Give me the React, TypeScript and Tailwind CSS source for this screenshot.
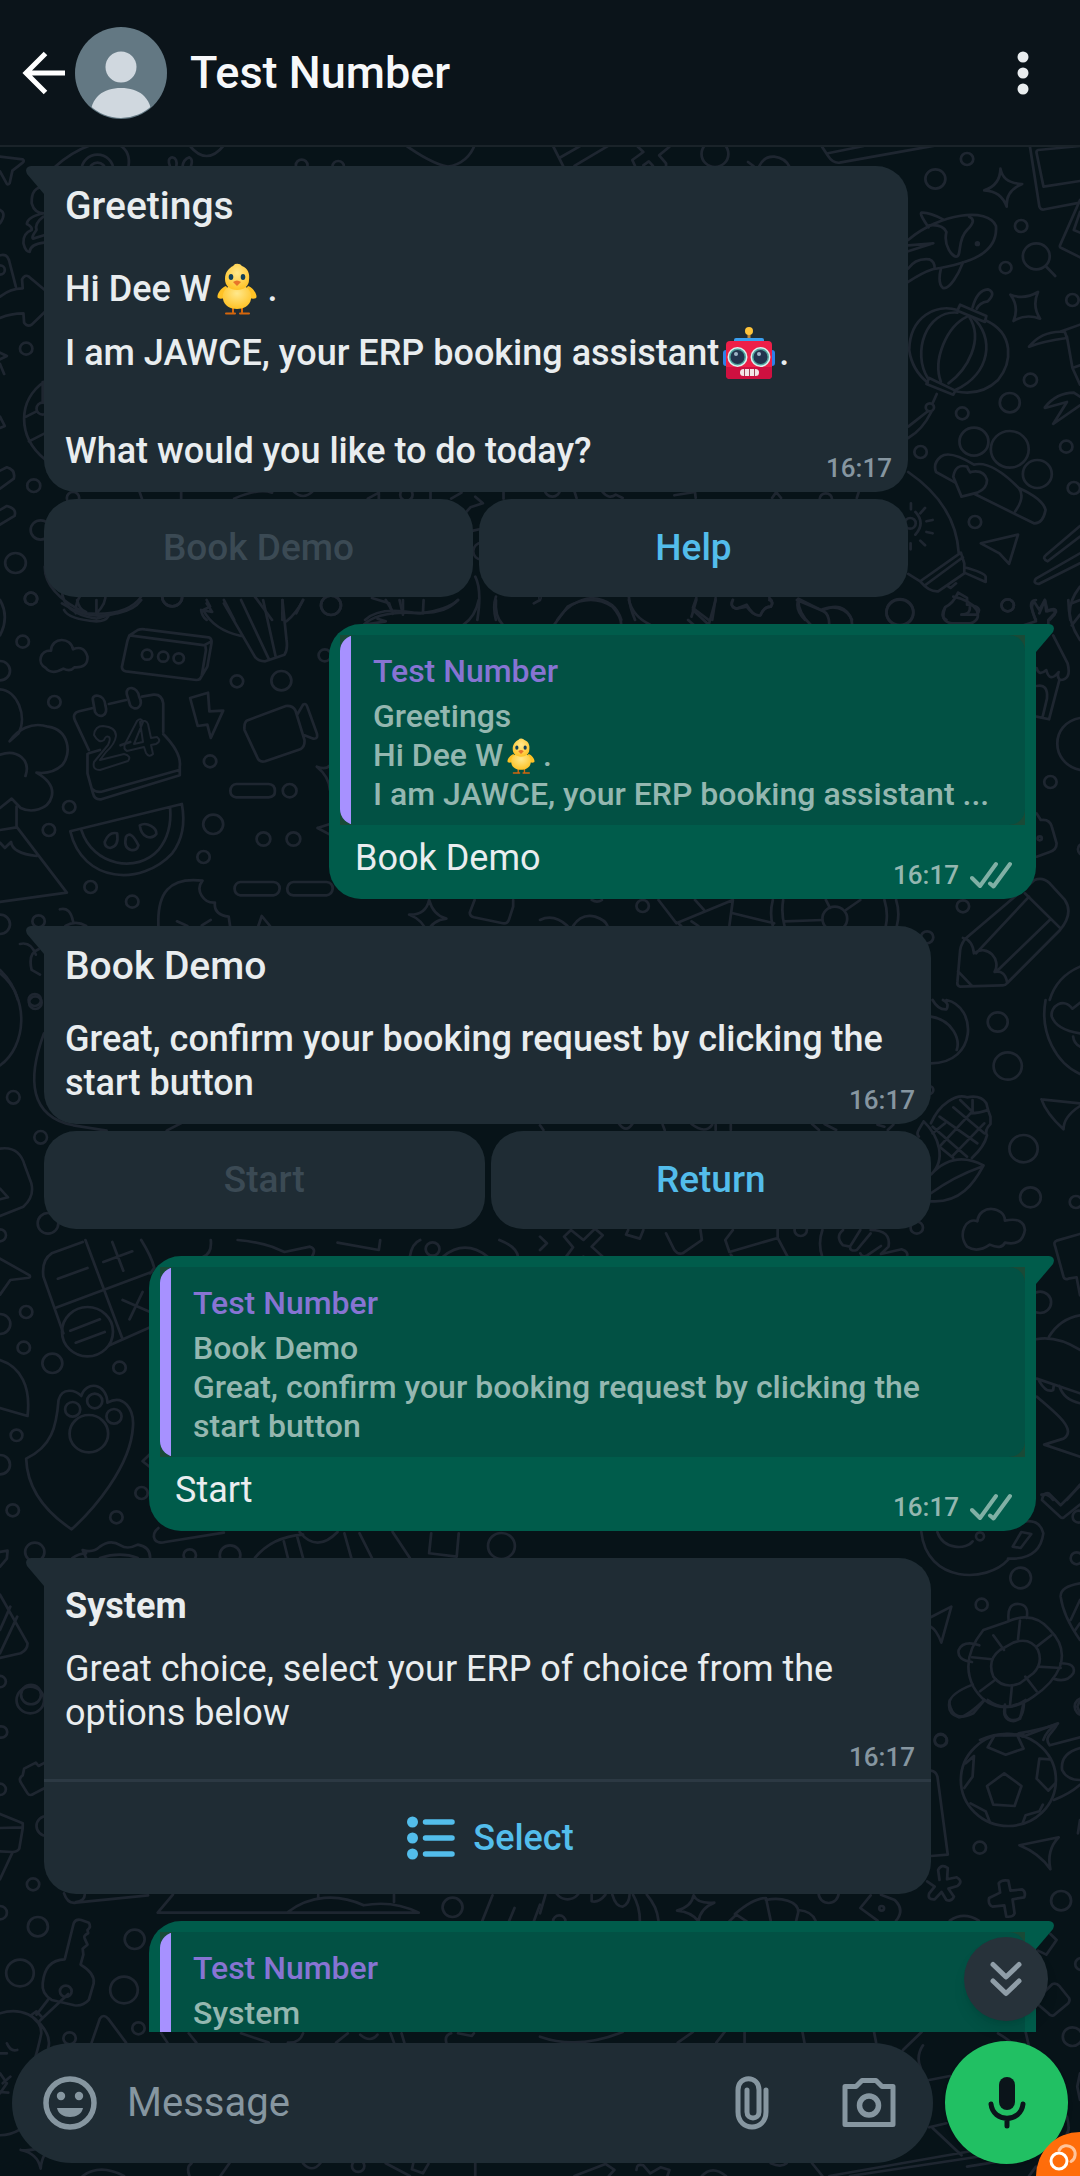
import type { ReactNode } from "react";

type Patch = {
  x: number;
  y: number;
  dots: [number, number, number][];
  lines: string[];
};

/* Line-art doodles of the chat wallpaper, drawn at three times their size. */
const patches: Patch[] = [
  {
    x: 0,
    y: 0,
    dots: [[876, 496, 17], [982, 500, 17], [283, 510, 46], [283, 512, 24]],
    lines: [
      "M0 470L66 478Q72 482 66 488L36 512L28 550Q22 558 18 548L0 514",
      "M160 500Q210 455 262 436M348 436Q380 455 373 500",
      "M494 500Q484 476 500 472Q516 474 512 500M530 500Q532 478 550 472Q562 478 554 500",
      "M550 436Q600 500 650 436",
      "M1170 430Q1250 490 1300 500Q1360 490 1380 430",
      "M130 560Q90 560 92 610Q100 640 128 640Q80 650 78 672Q94 680 92 690Q66 700 68 730Q74 756 86 756Q88 732 128 728",
      "M126 650Q100 670 106 690Q90 712 96 716L128 706",
      "M0 630Q20 640 0 670",
    ],
  },
  {
    x: 540,
    y: 0,
    dots: [[508, 462, 39], [1240, 477, 18], [1148, 537, 29], [1397, 678, 18], [1352, 803, 17], [1441, 769, 39], [1270, 731, 4]],
    lines: [
      "M34 430L68 500M56 474L120 436M100 498L200 436",
      "M280 436L300 456L268 480L276 498M376 440L346 466L366 490V498M300 496L316 484L328 498",
      "M636 500Q650 468 680 470Q712 474 724 500M604 486L620 498",
      "M816 436L838 470Q850 490 870 488L1150 436M836 460L940 438",
      "M1337 506Q1344 550 1400 552Q1352 572 1355 620Q1340 574 1290 571Q1336 556 1337 506Z",
      "M1422 436L1450 620Q1454 632 1466 628L1568 608M1568 438L1446 450Q1440 452 1442 460L1462 560L1568 543",
      "M1568 600L1510 736Q1508 742 1514 744L1568 772M1568 636L1550 690L1568 698",
      "M1069 720C1160 640 1300 620 1324 678C1330 760 1250 790 1140 808Q1110 818 1069 846",
      "M1128 682Q1100 640 1108 638Q1130 636 1170 658M1130 676Q1170 672 1180 696C1170 740 1200 770 1208 770C1226 770 1210 720 1240 690Q1270 660 1246 650",
      "M1069 736L1142 730L1069 754M1069 806Q1090 774 1130 778Q1146 784 1146 806M1164 806Q1154 850 1170 864C1190 870 1216 820 1228 788",
      "M1468 798L1496 828",
    ],
  },
  {
    x: 0,
    y: 220,
    dots: [[76, 386, 18], [98, 797, 19], [45, 1029, 30], [90, 1136, 18], [118, 930, 29], [1180, 824, 18], [500, 1130, 29], [961, 1156, 29], [124, 566, 18], [0, 150, 14], [1400, 994, 26], [212, 834, 18]],
    lines: [
      "M0 106Q20 100 26 120L46 200M0 230Q30 205 66 205L64 178Q72 162 84 170L130 210M0 294Q30 280 68 280L70 308Q80 322 92 314L130 276",
      "M0 398L20 408L0 418M0 432L12 462",
      "M130 484C50 540 50 650 130 718M124 486V548M76 590L106 574M84 664L130 640M0 590L14 618L0 624",
      "M0 752L20 742Q46 750 40 776L0 806M0 870L20 858Q50 866 42 888L0 914",
      "M130 1040Q130 1120 250 1180M250 1180Q370 1190 410 1130M180 1110Q180 1180 280 1196L316 1186M220 1180Q220 1130 246 1118M280 1180Q310 1150 306 1120",
      "M600 1150L616 1176L584 1170Q586 1190 600 1200M650 1140L680 1200M740 1130L790 1200M820 1140V1200M880 1140L860 1180",
      "M1080 1134L1130 1150L1140 1182M1170 1140V1184M1060 1200Q1100 1160 1200 1178Q1290 1186 1330 1140M1380 1070Q1400 1110 1386 1200M1440 1130Q1430 1160 1440 1200M1550 1150L1568 1140",
      "M404 812L412 836M526 812V836M680 836Q750 804 790 818M850 812Q880 844 910 812M1068 836L1100 818V836M1250 812V836M1310 836L1340 818M1380 830L1402 850L1366 862L1350 880M1462 812V836M1374 932L1392 928",
    ],
  },
  {
    x: 540,
    y: 220,
    dots: [[1546, 240, 18], [1424, 480, 19], [1364, 548, 29], [1226, 580, 18], [1132, 562, 12], [1105, 696, 18], [1260, 665, 42], [1364, 688, 55], [1444, 762, 42], [1528, 680, 18], [1550, 804, 18], [1263, 906, 18], [1358, 1156, 18], [1045, 1176, 39], [1075, 910, 16], [36, 808, 22], [830, 838, 18]],
    lines: [
      "M1366 224Q1406 240 1446 216Q1428 258 1452 296Q1410 280 1375 303Q1392 260 1366 224Z",
      "M1072 390C1074 290 1150 250 1212 270M1126 488Q1080 450 1072 390M1212 278C1120 270 1080 400 1126 474M1240 290C1180 320 1140 420 1164 486M1246 290C1290 360 1240 450 1186 490M1256 292C1320 350 1310 460 1206 510M1292 300C1380 340 1370 430 1330 480Q1280 530 1206 514",
      "M1212 272L1220 254L1296 288L1292 306ZM1122 492L1130 474L1206 512L1200 524ZM1256 262Q1270 210 1300 208Q1326 218 1300 244Q1276 248 1268 266M1152 522L1140 550M1126 574L1069 620M1136 576Q1110 630 1069 654",
      "M1420 380Q1460 330 1524 336L1530 354Q1460 364 1420 380ZM1514 334L1568 314M1530 350L1546 444L1568 436M1546 444L1568 494M1466 562Q1500 518 1550 518L1568 530M1466 564L1530 546L1490 612L1568 556",
      "M1260 734Q1190 690 1164 710Q1140 730 1150 756L1206 788M1260 734Q1310 720 1390 804Q1410 830 1380 874M1390 804Q1460 836 1468 870Q1460 912 1434 910L1262 822",
      "M1224 830L1200 770Q1206 730 1240 740Q1250 762 1250 756Q1290 748 1298 780Q1298 806 1270 818Z",
      "M1069 756C1160 820 1210 900 1216 1000M1104 1084L1222 998L1232 1030V1060L1156 1114Q1130 1116 1104 1084ZM1118 1096L1228 1012M1069 1062L1104 1084M1232 1042Q1290 1058 1294 1070V1086L1232 1058M1186 1100L1192 1104L1208 1090",
      "M1077 850V868M1118 864L1104 880M1140 900L1122 904M1140 940L1122 936M1118 976L1104 962M1076 988V970M1090 876Q1120 910 1090 944",
      "M1280 970L1388 944L1362 1032L1334 1000Z",
      "M1568 918L1470 1004Q1456 1016 1474 1024L1568 950M1568 1000L1440 1076Q1430 1090 1448 1092L1568 1030",
      "M50 1200Q90 1140 150 1134Q220 1140 236 1200M258 1130Q260 1160 276 1200M454 1134L444 1164L490 1200M510 1134L500 1200M560 1140Q550 1160 570 1166L600 1160Q620 1190 640 1186Q650 1160 670 1160Q680 1146 666 1134M750 1140Q740 1170 770 1200M750 1136L820 1172Q880 1140 906 1200",
      "M1214 1118Q1200 1150 1176 1162Q1160 1190 1180 1200M1214 1118L1240 1134V1154Q1290 1160 1268 1184H1224M1440 1200Q1420 1160 1434 1144L1450 1170L1466 1140L1474 1174Q1500 1164 1494 1184L1480 1200M1568 1100Q1530 1150 1540 1200",
      "M100 814L106 834M180 814Q200 840 220 824L240 834M390 826L450 816L452 834M674 834L686 816L700 834M920 834L926 814",
    ],
  },
  {
    x: 0,
    y: 600,
    dots: [[66, 125, 18], [688, 244, 18], [817, 242, 29], [158, 306, 18], [610, 484, 18], [841, 572, 20], [201, 621, 18], [142, 690, 18], [619, 673, 29], [765, 717, 20], [852, 717, 20], [591, 771, 18], [263, 861, 18], [384, 905, 18], [427, 164, 15], [474, 170, 15], [519, 175, 15], [112, 964, 18], [0, 212, 29], [0, 973, 29], [943, 166, 18], [500, -10, 29], [961, 16, 29], [101, 1200, 18], [90, -4, 18]],
    lines: [
      "M133 204C106 190 116 150 148 152C150 110 206 110 212 148Q244 134 254 170Q256 204 216 202Q204 216 184 206Q150 226 133 204Z",
      "M370 122L354 200Q354 212 366 214L570 240Q582 240 586 226L598 150L596 136L376 106ZM376 106L400 90Q410 86 420 88L606 112Q616 116 614 130L602 200L580 238M596 134L614 124",
      "M218 362Q208 340 230 334L270 324M316 312L366 300M412 290L446 284Q470 282 474 310V396M474 402C510 440 526 470 522 500V526L294 598Q274 600 270 580L254 520V462M218 362L258 450M258 460L290 450M350 436L378 426M266 566Q280 580 300 574L520 510",
      "M270 302C264 280 304 280 306 316C316 350 286 356 276 336ZM368 282C364 256 400 258 404 290C420 322 390 336 378 316Z",
      "M552 294L604 278L608 334L648 332L612 414L602 374L574 378Z",
      "M716 362L830 318Q850 316 858 332L884 420Q886 440 872 448L770 484Q752 488 746 470L710 390Q708 370 716 362ZM864 342L880 314Q888 308 892 320L920 400Q924 418 910 416L884 406",
      "M686 552H780Q800 554 798 576Q798 590 780 592H686Q668 590 669 572Q670 554 686 552ZM698 846H794Q812 848 812 866Q810 884 794 886H698Q682 884 681 866Q682 848 698 846ZM852 846H948Q966 848 966 866Q964 884 948 886H852Q834 884 834 866Q836 848 852 846Z",
      "M204 694L528 612Q544 700 500 760C410 860 240 850 204 694ZM236 690C270 800 400 820 460 750Q500 700 494 624M304 726Q316 694 340 700Q346 740 320 744Q304 742 304 726ZM366 710Q380 690 402 736Q398 754 380 750Q358 744 366 710ZM406 676C426 664 456 684 454 702C440 720 410 714 406 676Z",
      "M0 268C50 270 80 350 54 400L28 424C50 390 90 364 140 380C200 390 210 460 180 496Q150 524 106 518Q160 550 150 590C140 630 90 640 60 624L34 596L0 624M0 464C50 446 90 480 74 528",
      "M48 620V680L194 878L0 906M48 682L0 690M0 728L14 744L32 726Q36 760 106 768",
      "M460 978C456 880 490 830 588 842C566 870 590 910 624 908Q620 944 664 950L668 978M514 964L544 978M612 960L586 976M750 978L760 948L784 978",
      "M1188 944Q1236 946 1246 900Q1258 946 1296 956Q1256 960 1240 998Q1228 960 1188 944ZM1378 900L1364 938Q1364 948 1376 952L1460 970Q1474 972 1478 958L1490 920V900",
      "M0 0Q28 50 0 106M186 30Q200 58 280 64Q306 64 314 50M180 10Q260 64 340 40Q390 30 410 0M224 0Q230 30 250 36M280 0V40",
      "M590 30Q620 90 700 108M590 30L610 20L600 0M650 10L740 170Q750 184 770 184L826 164Q836 150 832 120L820 0M700 0L780 176M764 0L800 168M880 0Q860 40 832 64",
      "M1056 74Q1100 30 1220 40Q1300 30 1330 0M1120 0L1140 34M1160 0L1168 36M1230 0L1228 40M1390 0Q1380 50 1346 74M1440 0Q1436 50 1460 74M1060 74L1120 64L1096 56",
      "M920 500Q946 510 958 496M920 500Q956 530 958 570M922 684L958 672M922 684L958 704M174 928Q204 920 212 964M190 978Q220 960 250 978M58 1032Q90 1024 104 1064M112 1048Q80 1060 92 1110L116 1124M0 1110Q40 1150 52 1200",
    ],
  },
  {
    x: 540,
    y: 600,
    dots: [[1045, 38, 39], [1358, 16, 18], [1482, 546, 18], [298, 918, 18], [856, 956, 36], [1228, 919, 18], [1124, 1012, 18], [1451, 715, 6], [1580, 748, 18], [0, -6, 2]],
    lines: [
      "M40 76L80 20Q150 -20 210 20Q236 50 236 76M258 0Q270 50 320 74M454 0L440 50M430 60L446 74M444 30L490 74M510 0L490 74M560 0Q550 20 570 26L600 14Q620 50 640 46Q650 20 670 20Q680 6 666 0M750 0Q750 40 786 74M746 0L820 32Q840 40 840 74M820 28C870 10 906 40 906 72",
      "M1176 24Q1160 66 1196 70H1250Q1280 60 1268 30Q1250 0 1200 -10M1224 44Q1250 44 1248 22M1404 76L1440 64L1426 20Q1424 0 1440 0M1450 40L1466 0L1470 34Q1500 20 1498 36L1476 60V76M1534 0Q1534 70 1568 120M1544 10L1568 0M1544 76L1568 44",
      "M1490 106L1532 190Q1544 240 1510 240Q1500 230 1506 216Q1480 250 1470 210Q1448 230 1442 204M1442 258Q1476 250 1472 296L1460 348M1508 240L1478 358L1442 350",
      "M1568 354C1480 370 1480 490 1568 510M1442 640L1454 660Q1480 656 1486 680L1500 730Q1500 750 1480 756L1442 770",
      "M1408 880L1512 986M1420 890L1266 1060M1240 1012L1436 840Q1460 830 1480 850L1524 900Q1550 940 1510 990L1356 1150Q1350 1158 1340 1156L1220 1160Q1210 1158 1212 1146L1220 1050Q1224 1026 1240 1012ZM1480 960L1330 1110M1228 1014Q1256 1020 1260 1060C1300 1030 1340 1080 1320 1116Q1350 1110 1356 1146M1214 1114L1254 1158",
      "M344 900L396 970L560 900M450 900L476 930M404 972L410 978M560 900L550 976M440 964L460 978M560 940L680 970M676 900Q666 940 676 978M706 900Q700 940 710 978M1000 900Q1012 940 1004 978M1034 900Q1046 940 1036 978M710 964L820 960M830 900L842 924M888 930L930 900",
      "M0 960Q40 940 80 978M96 978Q120 940 160 950Q190 960 196 978M150 900Q166 910 180 900",
      "M1480 1200Q1500 1130 1568 1100",
    ],
  },
  {
    x: 540,
    y: 1000,
    dots: [[1329, 66, 29], [1358, 198, 41], [1404, 446, 41], [1424, 592, 30], [1556, 606, 18], [1094, 683, 18], [1452, 907, 32], [757, 690, 18], [1130, 270, 12]],
    lines: [
      "M1135 50C1200 60 1220 120 1210 150M1180 0C1270 20 1270 190 1135 190M1140 0Q1156 30 1180 28Q1190 10 1170 0",
      "M1468 0C1450 100 1500 190 1568 222M1568 8L1546 26C1520 -10 1480 20 1486 50Q1500 90 1568 100M1548 110Q1550 130 1568 140",
      "M1456 298L1568 310M1456 298Q1470 340 1520 388Q1520 350 1568 318",
      "M1135 370C1160 310 1210 280 1240 292Q1280 284 1296 310Q1300 330 1308 350V372Q1290 390 1298 406Q1290 440 1254 474M1200 322L1290 400M1160 350L1270 430M1140 380L1240 470M1140 400L1176 370M1160 440L1250 340M1196 470L1290 370M1220 300L1260 340M1250 340Q1276 340 1300 330M1160 440L1200 474M1256 300V340",
      "M1114 364C1100 390 1090 400 1100 410M1114 364C1160 410 1180 480 1135 524Q1200 450 1288 496C1260 550 1220 610 1135 604M1282 500Q1200 530 1135 580",
      "M1240 740C1210 700 1240 650 1270 664C1276 610 1350 620 1350 662Q1404 650 1408 690Q1400 740 1350 728Q1340 750 1306 734Q1270 760 1240 740Z",
      "M1568 702L1500 722Q1490 726 1496 740L1520 830Q1524 840 1534 836L1558 832L1568 886M1440 1018Q1500 1006 1568 1050M1478 1010Q1510 956 1568 946M1442 1136L1568 1180M1450 1144Q1470 1180 1490 1170L1492 1156M1508 1158Q1520 1200 1568 1210M1442 1190C1500 1240 1560 1290 1520 1316L1464 1334L1568 1370M1456 1484Q1476 1480 1490 1500M1568 1454L1530 1500",
      "M0 710L20 730L0 750M70 710L96 742L76 770M70 710L90 690L126 720L160 686L182 706L150 740L182 770M126 770V774M256 690L250 704L290 716L300 690M366 700L390 750Q400 764 414 760L470 720L466 690M560 690L538 720L550 756L690 714V688M554 764L560 772M690 714L720 772M820 690Q806 730 820 772",
      "M880 690Q856 710 880 736L900 740L930 690M900 740Q900 756 920 750L960 700M930 760Q936 774 950 766L990 738M960 690Q1020 690 1012 740L990 762L1050 748Q1070 754 1066 770",
      "M0 376L10 390M230 372Q250 400 268 372M356 374L362 390M440 372Q480 404 500 374M510 374V390M554 374V390M790 372L810 390M826 372L860 390M980 374L1000 380M1010 390L1026 374",
    ],
  },
  {
    x: 0,
    y: 1240,
    dots: [[76, 216, 18], [0, 252, 30], [69, 323, 18], [152, 370, 29], [347, 383, 18], [211, 508, 22], [275, 483, 22], [331, 529, 22], [258, 581, 56], [48, 586, 17], [0, 674, 29], [411, 759, 18], [37, 811, 18], [338, 832, 18], [101, 936, 28], [254, 275, 74], [668, 946, 30], [551, 946, 18], [1456, 918, 39], [1256, 27, 20], [0, 1325, 17], [90, 1364, 29]],
    lines: [
      "M0 56L86 106Q90 114 78 114L30 120L0 164",
      "M410 0Q440 50 448 84L436 100M240 6L150 40Q120 60 126 110L184 280M248 0L356 298M160 204L440 96M318 316L436 262M300 66L384 34M326 6L358 92M168 116L254 84M356 180L436 216M414 156L376 238M204 272L290 238M220 308L304 276",
      "M170 480C180 440 220 450 236 468C250 420 310 430 312 488C360 460 390 510 386 560C380 680 270 810 208 868Q80 780 76 656C150 620 164 560 170 480Z",
      "M0 360C60 380 90 440 80 528L0 504M436 642L414 664L436 682",
      "M460 864Q440 880 450 900Q460 912 480 906L650 878M250 954L240 930Q270 940 290 920Q320 896 350 916Q370 930 400 914Q436 920 436 954M210 954Q230 940 250 940M290 954Q350 934 400 954",
      "M740 954Q790 890 880 884M824 904L836 954M862 886L880 954M870 876Q920 940 980 876M1000 880L1020 954M1044 880L1080 954M1140 876L1190 954M1252 880L1246 940L1326 950L1332 880",
      "M0 1064L80 1210Q80 1230 60 1240L0 1254M0 1240L50 1130M0 1170L30 1100M0 936L22 932L20 956L0 980",
      "M612 0Q616 40 590 50M690 0Q740 4 790 20L826 36L900 20Q920 26 906 50M980 8L1100 30L1104 0M1190 50Q1196 10 1220 0M1286 50Q1350 -4 1416 50M1450 0Q1500 20 1504 50",
    ],
  },
  {
    x: 0,
    y: 1700,
    dots: [[4, 96, 17], [88, 0, 40], [0, 268, 17], [0, 638, 20], [96, 553, 18], [110, 680, 29], [391, 718, 29], [58, 819, 40], [360, 870, 40], [402, 985, 18], [202, 1015, 18], [1314, 622, 29], [191, 874, 17], [136, 378, 30], [1040, 1398, 18]],
    lines: [
      "M130 188L112 198L104 188L70 206L66 226Q52 236 62 250L80 280Q86 290 100 280L130 264",
      "M0 342L66 370V382L0 384M66 384L56 446Q50 456 36 456L0 454M36 458L0 538",
      "M186 580Q196 612 220 608L430 586M220 606Q246 602 246 584M502 584L458 638H1216Q1140 600 1056 616C980 580 900 586 836 636M924 584V594M1144 584V606M1430 586L1400 664M1494 624L1478 664M1568 614L1550 664",
      "M188 778L214 670Q220 656 236 660L258 668Q266 680 254 690L256 700Q240 708 246 716L254 734L240 746L242 764L234 794Q276 820 272 850L258 900Q240 920 216 916L150 900Q120 880 124 850Q130 780 188 778Z",
      "M142 896L106 944M198 882L120 958M90 946L106 934L124 954L110 968ZM0 940C60 920 120 950 120 1000Q110 1050 100 1080M116 970Q150 1010 140 1044M0 1060L20 1060M20 1030Q30 1056 50 1050M0 1120L20 1150L0 1180M0 1176L24 1178M8 1150L30 1130",
      "M266 1028L290 956Q300 940 314 956L366 1028M468 1000L486 1028M548 1000L570 1028M700 1000L780 1028M836 1028Q870 1030 880 1000M976 1028L1010 1000M1046 1004Q1076 1030 1096 1004M1134 1000L1144 1028M1166 1000L1174 1028M1296 1028Q1290 1006 1310 1000M1330 1000L1370 1008L1376 1000",
      "M0 1306Q30 1306 56 1290M60 1350Q90 1354 130 1340M60 1350Q110 1360 118 1406Q120 1380 130 1364M240 1428Q290 1390 360 1428M550 1428Q540 1400 556 1390M666 1390L640 1428M880 1390Q906 1420 930 1390M1120 1390L1190 1428M1200 1390L1196 1408L1228 1420L1244 1392M1380 1390V1428",
    ],
  },
  {
    x: 540,
    y: 1700,
    dots: [[1164, 122, 18], [1360, 240, 138], [1277, 443, 18], [1513, 602, 29], [992, 625, 7], [56, 664, 18], [1546, 1010, 28], [1572, 792, 18], [80, 560, 38], [838, 580, 29]],
    lines: [
      "M1190 0Q1180 40 1216 52Q1240 50 1290 0M1300 0Q1350 40 1410 0M1350 14V40Q1360 70 1394 56L1404 10M1568 0L1560 20L1568 40",
      "M1348 220L1398 258L1378 318L1316 314L1298 258ZM1300 142L1320 106H1386L1404 146L1352 164ZM1260 168L1256 230L1232 264M1260 168L1236 190M1480 178L1450 176L1442 236L1476 272L1496 250M1250 310L1294 334L1306 366M1460 314L1450 334L1410 346L1402 368",
      "M1390 100Q1450 90 1502 72C1490 100 1460 110 1480 136L1568 112M1568 144Q1510 160 1516 210Q1530 240 1568 240M1492 300Q1540 280 1568 254M1568 360L1562 400",
      "M1392 436L1506 412Q1470 450 1482 508Q1450 460 1392 436Z",
      "M1135 212Q1150 214 1154 230L1184 464L1135 468",
      "M1160 540L1156 510Q1166 490 1184 504L1182 538L1210 532Q1230 544 1212 558L1186 566L1202 590Q1196 606 1180 600L1166 576L1146 598Q1124 600 1130 580L1146 560L1124 544",
      "M1336 578L1332 550Q1340 538 1360 542L1366 572L1400 568Q1412 576 1406 592L1372 598L1378 640Q1374 652 1354 650L1348 616L1314 620Q1300 614 1304 594Z",
      "M398 632Q440 620 446 586Q456 612 506 608Q466 624 460 664Q440 636 398 632ZM566 642Q620 594 656 594L670 662M550 664L570 644L600 664M656 600C700 590 750 604 750 636L744 662M750 630Q790 634 800 662M960 586L930 624L980 662M990 584L1030 600Q1060 630 1034 662M1190 662Q1230 634 1274 662",
      "M150 584V604Q170 610 190 584M210 584Q220 620 240 620Q260 610 260 584M270 584Q290 620 290 662M310 584Q340 620 344 662M16 584L0 640",
      "M1482 702L1500 720L1470 764L1446 752M1450 890L1488 852Q1500 848 1508 858L1536 894Q1540 902 1534 910L1492 946Q1482 950 1476 940L1440 908",
      "M0 1010Q110 1050 240 996M444 996L400 1028M536 996L512 1028M594 996V1028M762 996L768 1028M970 996L976 1028M1108 996L1054 1050M1112 1036Q1090 1070 1106 1106M1130 1140L1190 1128M1330 1000Q1390 1036 1410 1080M1410 996L1420 1040M1140 1284L1224 1366M1130 1282L1180 1270M840 1428L1270 1350M900 1428L1300 1366M1240 1400L1420 1370M100 1428L190 1392L216 1410L200 1428M280 1410Q280 1390 300 1396L320 1420L350 1402L376 1410L370 1428M470 1428Q500 1394 540 1428M670 1390Q700 1404 716 1390M790 1390L820 1428M1530 1250Q1540 1290 1530 1300M1568 1120L1560 1160L1568 1200M1420 1428L1440 1400",
    ],
  },
  {
    x: 900,
    y: 1240,
    dots: [[362, 1014, 31], [245, 1094, 18], [530, 955, 18], [240, 889, 12], [536, 830, 18], [550, 1400, 26], [122, 1500, 18]],
    lines: [
      "M64 876C80 1030 260 1030 324 960M324 956Q420 960 430 880Q420 840 378 844M112 876C130 930 200 930 218 904M338 920L364 876L394 882L362 924Z",
      "M426 780Q430 756 446 760L482 796L540 738M426 780L482 832Q486 836 492 832L540 794",
      "M92 1132L154 1100L124 1208Q110 1170 92 1160M540 1030Q480 1040 482 1070Q490 1130 540 1200M512 1140L540 1080M526 1170L540 1150",
      "M250 1170L320 1146Q400 1110 450 1170Q500 1220 480 1280Q460 1330 400 1370C330 1420 260 1410 220 1340C190 1280 210 1220 250 1170ZM300 1230L340 1208Q390 1190 414 1230Q430 1270 400 1300L360 1330Q310 1350 280 1310Q260 1260 300 1230Z",
      "M326 1142Q320 1090 356 1092Q388 1094 380 1134M238 1216Q190 1200 176 1230Q170 1260 216 1266M482 1270Q530 1270 520 1300Q500 1330 460 1316M314 1402Q306 1440 340 1444Q370 1440 372 1390M218 1334Q150 1360 148 1390Q160 1450 220 1420L254 1380",
      "M280 1186L312 1230M360 1142L354 1198M454 1186L410 1220M482 1284L414 1280M376 1310L410 1354M336 1336L330 1396M240 1354L288 1318M216 1252L276 1258",
      "M240 1500Q310 1470 370 1490L474 1450Q440 1470 430 1500M310 1486L370 1482",
    ],
  },
  {
    x: 0,
    y: 940,
    dots: [[106, 188, 19], [40, 472, 19], [122, 592, 19], [144, 850, 31], [0, 886, 18]],
    lines: [
      "M0 100C90 170 80 320 0 376",
      "M132 280C80 420 90 530 220 556L320 572M500 572L550 546",
      "M0 626C40 620 64 640 74 676L94 730Q104 770 70 800L0 828M0 746L24 772L0 778",
    ],
  },
];

function Wallpaper() {
  return (
    <svg aria-hidden="true" width="1080" height="2176" viewBox="0 0 1080 2176" className="pointer-events-none absolute top-0 left-0" fill="none" stroke="#1e2630" strokeWidth="8" strokeLinecap="round" strokeLinejoin="round">
      {patches.map((p, i) => (
        <g key={i} transform={`translate(${p.x} ${p.y}) scale(${i < 10 ? 0.3444 : 0.3333} 0.3333)`}>
          {p.dots.map(([cx, cy, r], k) => <circle key={k} cx={cx} cy={cy} r={r} />)}
          {p.lines.map((d, k) => <path key={k} d={d} />)}
        </g>
      ))}
      <g strokeWidth="2">
        <path d="M94 735q1-9 9-9 13 1 13 10-1 8-10 16l-6 8 24-6q8 2 4 7l-28 9q-8 0-6-8l14-17q3-6 1-8-3-2-5 3-5 4-10-5Z" />
        <path d="m137 721q4-4 6 1l-9 22 9-2-3-20q6-3 8 2l3 14 6-1q5 4-1 7l-5 1 2 9q-4 4-7-1l-2-6-17 4q-4-2-2-7Z" />
      </g>
    </svg>
  );
}

function Chick({ className }: { className: string }) {
  return (
    <svg role="img" aria-label="chick" viewBox="0 0 52 52" className={`inline-block ${className}`}>
      <defs>
        <radialGradient id="down" cx="50%" cy="35%" r="65%"><stop offset="0" stopColor="#ffe88c" /><stop offset="1" stopColor="#ffc226" /></radialGradient>
      </defs>
      <path d="M22 43v6M31 43v6M15 50.500h9M29 50.500h9" stroke="#d4660c" strokeWidth="2" strokeLinecap="round" />
      <path d="M15 23C9 25 5 33 7 35C11 37 17 34 20 30M37 23C43 25 47 33 45 35C41 37 35 34 32 30" fill="#ffc226" />
      <path d="M26 22C14 22 11 30 12 36C13 43 20 46 26 46C32 46 39 43 40 36C41 30 38 22 26 22Z" fill="url(#down)" />
      <path d="M24 1Q29 0 31 3C37 5 39 11 38 17C38 23 33 27 26 27C19 27 14 23 14 16C14 9 18 5 22 3Z" fill="url(#down)" />
      <ellipse cx="20" cy="14" rx="2.300" ry="3" fill="#12405a" /><ellipse cx="32" cy="14" rx="2.300" ry="3" fill="#12405a" />
      <path d="M22 19Q26 16 30 19L26 23Z" fill="#e8742a" />
    </svg>
  );
}

function Robot() {
  return (
    <svg role="img" aria-label="robot" viewBox="0 0 52 52" className="size-[52px]">
      <path d="M26 6v6" stroke="#c08a3a" strokeWidth="3" /><circle cx="26" cy="4" r="4" fill="#ffc43a" />
      <rect x="11" y="11" width="30" height="6" rx="2" fill="#3aa0f0" />
      <rect x="0" y="23" width="6" height="16" rx="3" fill="#2f80e8" /><rect x="46" y="23" width="6" height="16" rx="3" fill="#2f80e8" />
      <rect x="3" y="14" width="46" height="38" rx="4" fill="#ee1f48" /><path d="M3 40h46v8q0 4-4 4H7q-4 0-4-4Z" fill="#cf1040" />
      <circle cx="14.500" cy="30" r="10" fill="#d9f1f0" /><circle cx="37.500" cy="30" r="10" fill="#d9f1f0" />
      <circle cx="14.500" cy="30" r="8.500" fill="#4fa39d" /><circle cx="37.500" cy="30" r="8.500" fill="#4fa39d" />
      <circle cx="14.500" cy="30" r="7" fill="#22344e" /><circle cx="37.500" cy="30" r="7" fill="#22344e" />
      <circle cx="13" cy="27" r="2" fill="#9fb4c8" /><circle cx="36" cy="27" r="2" fill="#9fb4c8" />
      <rect x="17" y="42" width="19" height="7" rx="3.500" fill="#f3e4e6" /><path d="M21.500 42v7M26.500 42v7M31.500 42v7" stroke="#a04258" />
    </svg>
  );
}

function DarkTail() {
  return <svg aria-hidden="true" viewBox="0 0 18 28" className="absolute top-0 -left-[18px] h-7 w-[18px]"><path d="M18 0H5Q-2 1 1 8L18 28Z" fill="#1f2c34" /></svg>;
}

function GreenTail() {
  return <svg aria-hidden="true" viewBox="0 0 18 28" className="absolute top-0 -right-[18px] h-7 w-[18px]"><path d="M0 0H13Q20 1 17 8L0 28Z" fill="#005c4b" /></svg>;
}

function Received({ title, children, className }: { title: string; children: ReactNode; className: string }) {
  return (
    <article className={`relative grid max-w-full rounded-[32px] rounded-tl-none bg-[#1f2c34] text-[36px] leading-[44px] font-medium text-[#e9edef] ${className}`}>
      <DarkTail />
      <div className="col-start-1 row-start-1 flex flex-col gap-[27px] px-[21px] pt-4 pb-[19px]">
        <h2 className="text-[39px] leading-[48px]">{title}</h2>
        <div>{children}</div>
      </div>
      <time className="col-start-1 row-start-1 mr-4 mb-2 self-end justify-self-end text-[26px] leading-8 text-[#8696a0]">16:17</time>
    </article>
  );
}

function Replies({ used, next, className }: { used: string; next: string; className: string }) {
  return (
    <div className={`mt-[7px] grid max-w-full grid-cols-2 gap-[6px] text-[37px] font-medium ${className}`}>
      <button type="button" disabled className="h-[98px] rounded-[32px] bg-[#1f2c34] text-[#3b4a54]">{used}</button>
      <button type="button" className="h-[98px] rounded-[32px] bg-[#1f2c34] text-[#53bdeb]">{next}</button>
    </div>
  );
}

function Sent({ quote, text, className }: { quote: ReactNode; text?: string; className: string }) {
  return (
    <article className={`relative grid max-w-full self-end rounded-[32px] rounded-tr-none bg-[#005c4b] ${className}`}>
      <GreenTail />
      <div className="col-start-1 row-start-1">
        <div className="m-[11px] bg-[#194a37]">
          <blockquote className="flex h-[190px] overflow-hidden rounded-2xl bg-[#025144] text-[32px] leading-[39px] font-medium text-[#94b7b0]">
            <span className="w-[11px] shrink-0 bg-[#a791ff]" />
            <div className="min-w-0 flex-1 pt-4 pr-3 pl-[22px]">
              <p className="mb-[6px] leading-[40px] text-[#8774d3]">Test Number</p>
              {quote}
            </div>
          </blockquote>
        </div>
        {text && <p className="pb-[19px] pl-[26px] text-[36px] leading-[44px] text-[#e9edef]">{text}</p>}
      </div>
      {text && (
        <div className="col-start-1 row-start-1 mr-6 mb-2 flex items-center gap-[11px] self-end justify-self-end text-[26px] leading-8 font-medium text-[#94b7b0]">
          <time>16:17</time>
          <svg role="img" aria-label="Delivered" viewBox="0 0 42 28" className="h-7 w-[42px]" fill="none" stroke="#80b0a5" strokeWidth="4" strokeLinecap="round" strokeLinejoin="round">
            <path d="M2 17L10 25L26 3M20 22.500L23.500 25.500L40 3" />
          </svg>
        </div>
      )}
    </article>
  );
}

function Header() {
  return (
    <header className="relative flex h-[147px] shrink-0 items-center border-b-2 border-[#1a2329] bg-[#0b141a] pr-[27px] pl-[22px]">
      <button type="button" aria-label="Back" className="mr-[9px]">
        <svg viewBox="0 0 44 44" className="size-11" fill="none" stroke="#fff" strokeWidth="5"><path d="M43 22H4M23.500 2.500L4 22L23.500 41.500" /></svg>
      </button>
      <svg role="img" aria-label="Profile picture" viewBox="0 0 92 92" className="size-[92px]">
        <defs><clipPath id="face"><circle cx="46" cy="46" r="45" /></clipPath></defs>
        <circle cx="46" cy="46" r="46" fill="#637883" />
        <g clipPath="url(#face)" fill="#d0d8df"><circle cx="46" cy="40" r="15.500" /><path d="M15 92C15 70 28 61 46 61C64 61 77 70 77 92Z" /></g>
      </svg>
      <h1 className="flex-1 pl-[23px] text-[45px] leading-[56px] font-medium text-[#f7f8fa]">Test Number</h1>
      <button type="button" aria-label="More options">
        <svg viewBox="0 0 60 44" className="h-11 w-[60px]" fill="#e9edef"><circle cx="30" cy="6" r="5.500" /><circle cx="30" cy="22" r="5.500" /><circle cx="30" cy="38" r="5.500" /></svg>
      </button>
    </header>
  );
}

function Composer() {
  return (
    <footer className="relative flex shrink-0 items-center gap-3 px-3 pt-[9px] pb-3">
      <div className="flex h-[120px] min-w-0 flex-1 items-center rounded-full bg-[#1f2c34] pr-[37px] pl-[31px]">
        <button type="button" aria-label="Emoji">
          <svg viewBox="0 0 54 54" className="size-[54px]" fill="none" stroke="#8696a0" strokeWidth="5.500">
            <circle cx="27" cy="27" r="24" />
            <g fill="#8696a0" stroke="none"><circle cx="18" cy="20" r="4.200" /><circle cx="36" cy="20" r="4.200" /><path d="M14 32H40C38 44 16 44 14 32Z" /></g>
          </svg>
        </button>
        <input aria-label="Message" placeholder="Message" className="ml-[30px] h-[52px] min-w-0 flex-1 bg-transparent text-[40px] leading-[52px] text-[#e9edef] outline-none placeholder:text-[#8696a0]" />
        <button type="button" aria-label="Attach">
          <svg viewBox="0 0 34 54" className="h-[54px] w-[34px]" fill="none" stroke="#8696a0" strokeWidth="5" strokeLinecap="round">
            <path d="M31 14V36C31 56 3 56 3 36V14C3 -1 24 -1 24 14V36C24 44 12 44 12 36V14" />
          </svg>
        </button>
        <button type="button" aria-label="Camera" className="ml-[73px]">
          <svg viewBox="0 0 54 50" className="h-[50px] w-[54px]" fill="none" stroke="#8696a0" strokeWidth="5" strokeLinejoin="round">
            <path d="M3 8.500H14L20 2.500H34L40 8.500H51V46.500H3Z" /><circle cx="27" cy="27.500" r="9.500" strokeWidth="5.500" />
          </svg>
        </button>
      </div>
      <button type="button" aria-label="Record voice message" className="grid size-[123px] shrink-0 place-items-center rounded-full bg-[#21c063] shadow-md">
        <svg viewBox="0 0 38 52" className="h-[52px] w-[38px]" fill="none" stroke="#0b141a" strokeWidth="4.500" strokeLinecap="round">
          <path d="M19 8V25" strokeWidth="16" /><path d="M3 27C5 46 33 46 35 27M19 42V49" strokeWidth="5" />
        </svg>
      </button>
    </footer>
  );
}

export default function App() {
  return (
    <div className="relative flex h-screen flex-col overflow-hidden bg-[#071318] font-['Roboto','Liberation_Sans',sans-serif]">
      <Wallpaper />
      <Header />
      <div className="relative min-h-0 flex-1">
        <main className="flex h-full flex-col gap-[27px] overflow-hidden px-11 pt-[19px] *:shrink-0">
          <section>
            <Received title="Greetings" className="w-[864px]">
              <p className="flex h-16 items-center leading-[64px]"><span>Hi Dee W</span><Chick className="size-[52px]" /><span className="pl-1">.</span></p>
              <p className="flex h-16 items-center gap-1 leading-[64px]"><span>I am JAWCE, your ERP booking assistant</span><Robot /><span>.</span></p>
              <p className="mt-11">What would you like to do today?</p>
            </Received>
            <Replies used="Book Demo" next="Help" className="w-[864px]" />
          </section>
          <Sent
            className="w-[707px]"
            text="Book Demo"
            quote={<>
              <p>Greetings</p>
              <p className="flex h-[39px] items-center">Hi Dee W<Chick className="size-9" /><span className="pl-1">.</span></p>
              <p className="whitespace-nowrap">I am JAWCE, your ERP booking assistant ...</p>
            </>}
          />
          <section>
            <Received title="Book Demo" className="w-[887px]">
              <p>Great, confirm your booking request by clicking the start button</p>
            </Received>
            <Replies used="Start" next="Return" className="w-[887px]" />
          </section>
          <Sent
            className="w-[887px]"
            text="Start"
            quote={<><p>Book Demo</p><p className="max-w-[760px]">Great, confirm your booking request by clicking the start button</p></>}
          />
          <article className="relative w-[887px] max-w-full rounded-[32px] rounded-tl-none bg-[#1f2c34] text-[36px] leading-[44px] text-[#e9edef]">
            <DarkTail />
            <div className="grid">
              <div className="col-start-1 row-start-1 px-[21px] pt-6 pb-11">
                <h2 className="mb-[17px] leading-[48px] font-bold">System</h2>
                <p>Great choice, select your ERP of choice from the options below</p>
              </div>
              <time className="col-start-1 row-start-1 mr-4 mb-[6px] self-end justify-self-end text-[26px] leading-8 font-medium text-[#8696a0]">16:17</time>
            </div>
            <button type="button" className="flex h-[115px] w-full items-center justify-center gap-[18px] border-t-[3px] border-[#2c3943] pl-[6px] text-[36px] font-medium text-[#53bdeb]">
              <svg aria-hidden="true" viewBox="0 0 48 44" className="h-11 w-12" fill="#53bdeb">
                <circle cx="5.500" cy="6" r="5.500" /><circle cx="5.500" cy="22" r="5.500" /><circle cx="5.500" cy="38" r="5.500" />
                <path d="M18.500 6H45M18.500 22H45M18.500 38H45" stroke="#53bdeb" strokeWidth="5.500" strokeLinecap="round" />
              </svg>
              Select
            </button>
          </article>
          <Sent className="w-[887px]" quote={<p>System</p>} />
        </main>
        <button type="button" aria-label="Scroll to latest" className="absolute right-8 bottom-[11px] grid size-[84px] place-items-center rounded-full bg-[#27323a] shadow-lg">
          <svg viewBox="0 0 32 36" className="h-9 w-8" fill="none" stroke="#8f9da7" strokeWidth="5" strokeLinecap="round" strokeLinejoin="round"><path d="M3 3.500L16 16L29 3.500M3 20L16 32.500L29 20" /></svg>
        </button>
      </div>
      <Composer />
      <div className="absolute right-0 bottom-0 size-11 rounded-tl-full bg-[#ff6d0a]">
        <svg aria-hidden="true" viewBox="0 0 44 44" className="size-11" fill="none" strokeWidth="3" strokeLinecap="round">
          <circle cx="23" cy="29" r="8" stroke="#fff" /><path d="M23 18.500A8.500 8.500 0 1 1 35 29.500" stroke="#ffc49a" />
        </svg>
      </div>
    </div>
  );
}
